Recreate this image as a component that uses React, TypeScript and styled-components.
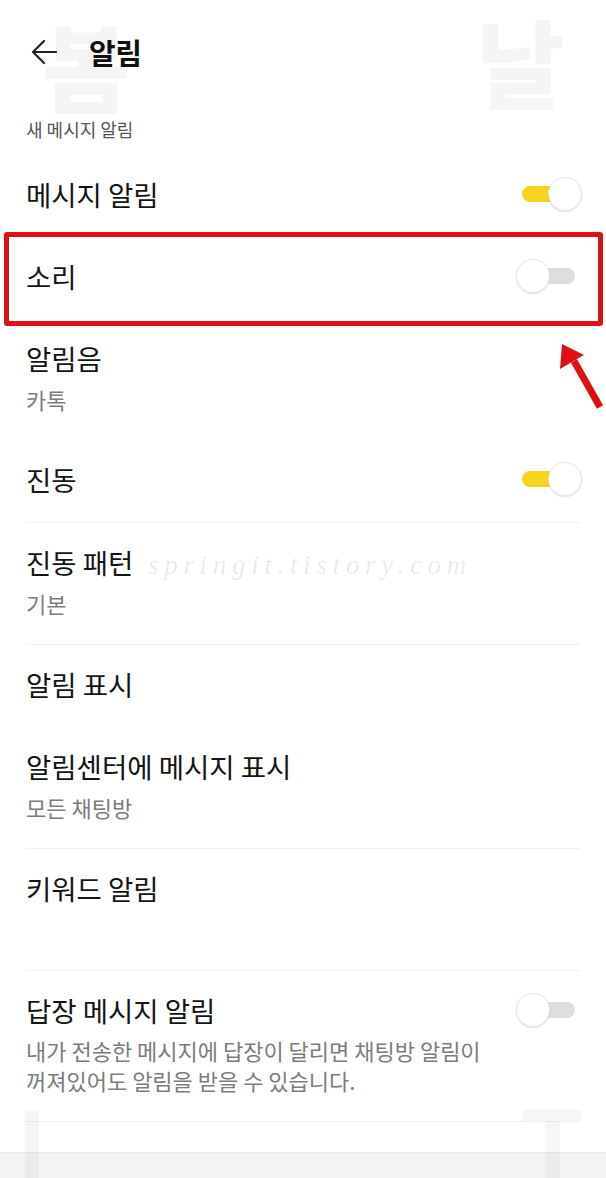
import React from 'react'
import styled, { createGlobalStyle } from 'styled-components'

type Item = {
  title: string
  sub?: string
  desc?: string[]
  toggle?: 'on' | 'off'
  blankSub?: boolean
  highlight?: boolean
  dividerAfter?: boolean
}

const items: Item[] = [
  { title: '메시지 알림', toggle: 'on' },
  { title: '소리', toggle: 'off', highlight: true },
  { title: '알림음', sub: '카톡' },
  { title: '진동', toggle: 'on', dividerAfter: true },
  { title: '진동 패턴', sub: '기본', dividerAfter: true },
  { title: '알림 표시' },
  { title: '알림센터에 메시지 표시', sub: '모든 채팅방', dividerAfter: true },
  { title: '키워드 알림', blankSub: true, dividerAfter: true },
  {
    title: '답장 메시지 알림',
    toggle: 'off',
    desc: [
      '내가 전송한 메시지에 답장이 달리면 채팅방 알림이',
      '꺼져있어도 알림을 받을 수 있습니다.',
    ],
    dividerAfter: true,
  },
]

const Switch = ({ on }: { on: boolean }): JSX.Element => (
  <SwitchBox>
    <Track $on={on} />
    <Knob $on={on} />
  </SwitchBox>
)

const App = (): JSX.Element => {
  return (
    <Page>
      <GlobalStyle />
      <Header>
        <BackButton>
          <svg width="26" height="26" viewBox="0 0 26 26" fill="none">
            <path
              d="M25 13H2M13 2L2 13L13 24"
              stroke="#222"
              strokeWidth="2.2"
              strokeLinecap="round"
              strokeLinejoin="round"
            />
          </svg>
        </BackButton>
        <Title>알림</Title>
      </Header>
      <SectionLabel>새 메시지 알림</SectionLabel>
      <List>
        {items.map(item => (
          <React.Fragment key={item.title}>
            <Row>
              <RowText>
                <RowTitle>{item.title}</RowTitle>
                {item.sub ? <RowSub>{item.sub}</RowSub> : null}
                {item.blankSub ? <RowSub>&nbsp;</RowSub> : null}
                {item.desc ? (
                  <RowDesc>
                    {item.desc.map(line => (
                      <div key={line}>{line}</div>
                    ))}
                  </RowDesc>
                ) : null}
              </RowText>
              {item.toggle ? <Switch on={item.toggle === 'on'} /> : null}
              {item.highlight ? <HighlightBox /> : null}
            </Row>
            {item.dividerAfter ? <Divider /> : null}
          </React.Fragment>
        ))}
      </List>
      <Spacer />
      <BottomBar />

      <Arrow width="56" height="80" viewBox="0 0 56 80">
        <line x1="24" y1="26" x2="50" y2="72" stroke="#dd1111" strokeWidth="7" />
        <polygon points="12,9 34,20 10,34" fill="#dd1111" />
      </Arrow>
      <Watermark>springit.tistory.com</Watermark>
      <BigGlyph $left={42} $top={16}>봄</BigGlyph>
      <BigGlyph $left={476} $top={12}>날</BigGlyph>
      <BigLatin $left={18} $top={1094}>I</BigLatin>
      <BigLatin $left={522} $top={1094}>T</BigLatin>
    </Page>
  )
}

const GlobalStyle = createGlobalStyle`
  html, body {
    margin: 0;
    padding: 0;
    background: #ffffff;
  }
  body {
    font-family: "Noto Sans CJK KR", "Noto Sans", sans-serif;
    color: #1a1a1a;
  }
`

const Page = styled.div`
  position: relative;
  width: 606px;
  height: 1178px;
  overflow: hidden;
  display: flex;
  flex-direction: column;
  background: #ffffff;
`

const Header = styled.div`
  height: 104px;
  display: flex;
  align-items: center;
  padding-left: 31px;
  gap: 32px;
`

const BackButton = styled.div`
  width: 26px;
  height: 26px;
  display: flex;
`

const Title = styled.div`
  font-size: 29px;
  font-weight: 700;
  letter-spacing: -0.5px;
  color: #111;
  line-height: 36px;
`

const SectionLabel = styled.div`
  padding: 13px 26px 14px;
  font-size: 18px;
  line-height: 24px;
  color: #555;
`

const List = styled.div`
  display: flex;
  flex-direction: column;
`

const Row = styled.div`
  position: relative;
  display: flex;
  align-items: center;
  justify-content: space-between;
  padding: 22px 24px 26px 26px;
`

const RowText = styled.div`
  display: flex;
  flex-direction: column;
`

const RowTitle = styled.div`
  font-size: 27.5px;
  line-height: 34px;
  color: #141414;
`

const RowSub = styled.div`
  margin-top: 9px;
  font-size: 22px;
  line-height: 30px;
  color: #7c7c7c;
`

const RowDesc = styled.div`
  margin-top: 8px;
  font-size: 22px;
  line-height: 30px;
  color: #7c7c7c;
`

const Divider = styled.div`
  height: 1px;
  margin: 0 26px;
  background: #f0f0f0;
`

const SwitchBox = styled.div`
  position: relative;
  flex: none;
  width: 66px;
  height: 34px;
  display: flex;
  align-items: center;
  padding: 0 7px 0 6px;
  box-sizing: border-box;
  align-self: flex-start;
`

const Track = styled.div<{ $on: boolean }>`
  width: 100%;
  height: 16px;
  border-radius: 8px;
  background: ${({ $on }) => ($on ? '#f6d31c' : '#dedede')};
`

const Knob = styled.div<{ $on: boolean }>`
  position: absolute;
  top: 0;
  ${({ $on }) => ($on ? 'right: 0;' : 'left: 0;')}
  width: 32px;
  height: 32px;
  border-radius: 50%;
  background: #ffffff;
  border: 1px solid #e6e6e6;
  box-shadow: 0 1px 2px rgba(0, 0, 0, 0.12);
`

const HighlightBox = styled.div`
  position: absolute;
  left: 4px;
  right: 3px;
  top: -5px;
  bottom: -7px;
  border: 5px solid #dd1111;
  border-radius: 3px;
  pointer-events: none;
`

const Spacer = styled.div`
  flex: 1;
`

const BottomBar = styled.div`
  height: 25px;
  background: #f4f4f4;
  border-top: 1px solid #ebebeb;
`

const Arrow = styled.svg`
  position: absolute;
  left: 550px;
  top: 335px;
`

const Watermark = styled.div`
  position: absolute;
  left: 148px;
  top: 548px;
  font-family: "Liberation Serif", serif;
  font-style: italic;
  font-size: 27px;
  line-height: 34px;
  letter-spacing: 5.7px;
  color: rgba(0, 0, 0, 0.09);
  pointer-events: none;
`

const BigGlyph = styled.div<{ $left: number; $top: number }>`
  position: absolute;
  left: ${({ $left }) => $left}px;
  top: ${({ $top }) => $top}px;
  font-size: 96px;
  font-weight: 900;
  line-height: 1;
  color: rgba(0, 0, 0, 0.04);
  pointer-events: none;
`

const BigLatin = styled.div<{ $left: number; $top: number }>`
  position: absolute;
  left: ${({ $left }) => $left}px;
  top: ${({ $top }) => $top}px;
  font-family: "Liberation Sans", sans-serif;
  font-size: 100px;
  font-weight: 700;
  line-height: 1;
  color: rgba(0, 0, 0, 0.035);
  pointer-events: none;
`

export default App
